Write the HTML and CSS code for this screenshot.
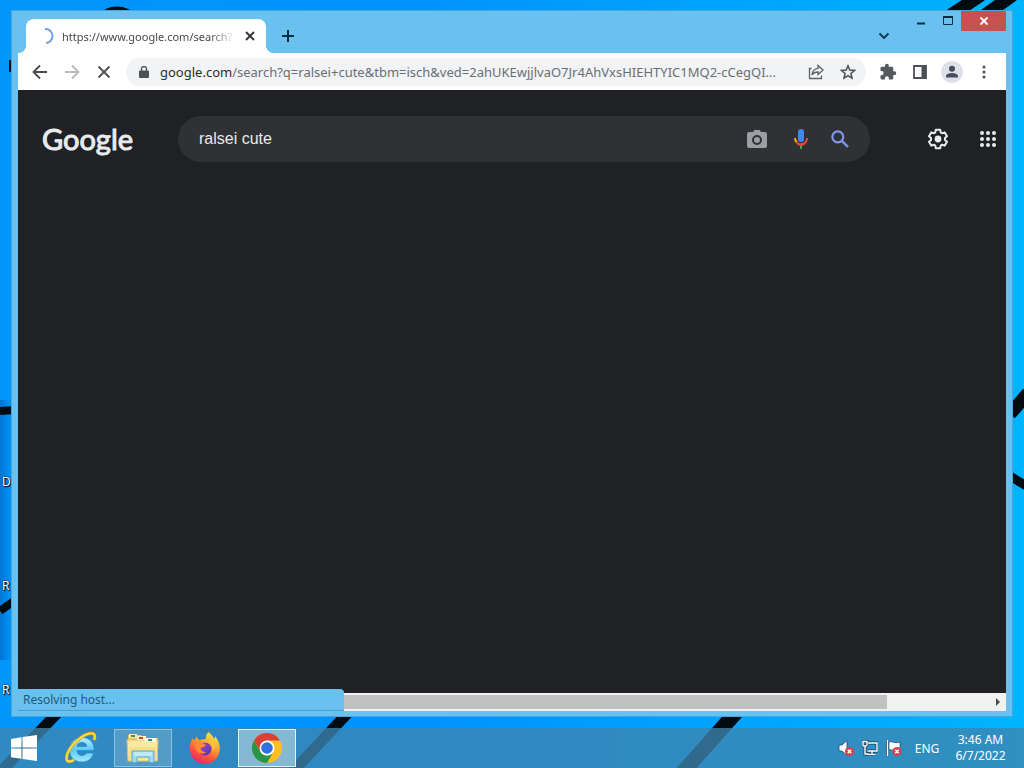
FILE: index.html
```html
<!DOCTYPE html>
<html lang="en">
<head>
<meta charset="utf-8">
<title>Desktop</title>
<link rel="stylesheet" href="styles.css">
</head>
<body>
<div class="desktop">
  <svg class="wallpaper" viewBox="0 0 1024 768" preserveAspectRatio="none" aria-hidden="true">
    <g fill="none" stroke="#020b10">
      <ellipse cx="117" cy="15" rx="14" ry="7" fill="#063a70" stroke-width="3"/>
      <path d="M0 411 14 410M0 611 14 601" stroke-width="8"/>
      <path d="M10 60v12" stroke-width="2"/>
      <path d="M70 700-17 790M360 700 268 798" stroke-width="11"/>
      <path d="M747 700 660 798" stroke-width="15"/>
      <path d="M981-5 951 15M1013-5 985 15M1010 414 1028 393" stroke-width="13"/>
      <path d="M1010 476 1028 487" stroke-width="9"/>
    </g>
  </svg>
  <span class="shortcut shortcut-1">D</span>
  <span class="shortcut shortcut-2">R</span>
  <span class="shortcut shortcut-3">R</span>

  <main class="window">
    <header class="titlebar">
      <div class="tab">
        <svg class="spinner" width="16" height="16" viewBox="0 0 16 16"><path d="M7 1a7 7 0 0 1 1 14" fill="none" stroke="#6fa0e4" stroke-width="2"/></svg>
        <span class="tab-title">https://www.google.com/search?</span>
        <button class="tab-close" aria-label="Close tab"><svg width="10" height="10" viewBox="0 0 10 10"><path d="m1 1 8 8M9 1 1 9" stroke="#333" stroke-width="1.8"/></svg></button>
      </div>
      <button class="new-tab" aria-label="New tab"><svg width="12" height="12" viewBox="0 0 12 12"><path d="M6 0v12M0 6h12" stroke="#0b2c40" stroke-width="2"/></svg></button>
      <button class="tab-search" aria-label="Search tabs"><svg width="12" height="8" viewBox="0 0 12 8"><path d="m1.500 1.500 4.500 4.500 4.500-4.500" fill="none" stroke="#12324a" stroke-width="1.800"/></svg></button>
      <div class="controls">
        <button class="control" aria-label="Minimize"><svg width="12" height="12" viewBox="0 0 12 12"><path d="M2 8.500h8" stroke="#0e2c46" stroke-width="2"/></svg></button>
        <button class="control" aria-label="Maximize"><svg width="12" height="12" viewBox="0 0 12 12"><path d="M1.500 2h9v7.500h-9z" fill="none" stroke="#0e2c46"/><path d="M1 2h10" stroke="#0e2c46" stroke-width="2"/></svg></button>
        <button class="control control-close" aria-label="Close"><svg width="10" height="10" viewBox="0 0 10 10"><path d="m1.500 1.500 7 7M8.500 1.500l-7 7" stroke="#fff" stroke-width="1.800"/></svg></button>
      </div>
    </header>

    <nav class="toolbar" aria-label="Browser">
      <button class="tool" aria-label="Back"><svg width="16" height="16" viewBox="0 0 16 16"><path d="M15 8H2M8 1.500 1.500 8 8 14.500" fill="none" stroke="#4b4d50" stroke-width="1.900"/></svg></button>
      <button class="tool" aria-label="Forward" disabled><svg width="16" height="16" viewBox="0 0 16 16"><path d="M1 8h13M8 1.500 14.500 8 8 14.500" fill="none" stroke="#b9babc" stroke-width="1.900"/></svg></button>
      <button class="tool" aria-label="Stop"><svg width="14" height="14" viewBox="0 0 14 14"><path d="m1.500 1.500 11 11M12.500 1.500l-11 11" stroke="#4b4d50" stroke-width="1.800"/></svg></button>
      <div class="omnibox">
        <svg width="10" height="12" viewBox="0 0 10 12"><path d="M1 4.500h8q1 0 1 1V11q0 1-1 1H1q-1 0-1-1V5.500q0-1 1-1z" fill="#4d5054"/><path d="M2.500 5V3a2.500 2.500 0 0 1 5 0v2" fill="none" stroke="#4d5054" stroke-width="1.300"/></svg>
        <a class="url" href="#"><span class="host">google.com</span>/search?q=ralsei+cute&amp;tbm=isch&amp;ved=2ahUKEwjjlvaO7Jr4AhVxsHIEHTYIC1MQ2-cCegQI...</a>
        <button class="omni-action" aria-label="Share"><svg width="16" height="16" viewBox="0 0 16 16"><path d="M3.500 4.500H1.500v10h12v-3M10 1.500l5 4.500-5 4.500V8C7 8 5.200 9 4 11c.3-3.500 2.500-6.200 6-6.600z" fill="none" stroke="#5c5f63" stroke-width="1.300"/></svg></button>
        <button class="omni-action" aria-label="Bookmark"><svg width="16" height="16" viewBox="0 0 16 16"><path d="m8 1.800 1.800 4.300 4.700.4-3.600 3 1.100 4.600L8 11.700l-4 2.400 1.100-4.600-3.600-3 4.700-.4z" fill="none" stroke="#4b4e52" stroke-width="1.500"/></svg></button>
      </div>
      <button class="tool" aria-label="Extensions"><svg width="18" height="18" viewBox="0 0 24 24"><path d="M20.500 11H19V7c0-1.100-.9-2-2-2h-4V3.500a2.500 2.500 0 0 0-5 0V5H4a2 2 0 0 0-2 2v3.800h1.500a2.700 2.700 0 0 1 0 5.400H2V20c0 1.100.9 2 2 2h3.800v-1.500a2.700 2.700 0 0 1 5.400 0V22H17c1.100 0 2-.9 2-2v-4h1.500a2.500 2.500 0 0 0 0-5z" fill="#55585c"/></svg></button>
      <button class="tool" aria-label="Side panel"><svg width="14" height="14" viewBox="0 0 14 14"><path d="M1 1h12v12H1z" fill="none" stroke="#4d5054" stroke-width="1.800"/><path d="M8.500 1H13v12H8.500z" fill="#4d5054"/></svg></button>
      <button class="tool" aria-label="Profile"><svg width="22" height="22" viewBox="0 0 22 22"><circle cx="11" cy="11" r="11" fill="#dee1e8"/><circle cx="11" cy="7.800" r="3" fill="#454c5e"/><path d="M5 16.500V15c0-2 3.500-3 6-3s6 1 6 3v1.500z" fill="#454c5e"/></svg></button>
      <button class="tool" aria-label="Menu"><svg width="4" height="14" viewBox="0 0 4 14"><g fill="#4d5054"><circle cx="2" cy="2" r="1.500"/><circle cx="2" cy="7" r="1.500"/><circle cx="2" cy="12" r="1.500"/></g></svg></button>
    </nav>

    <section class="page">
      <div class="search-row">
        <a class="logo" href="#">Google</a>
        <form class="search" role="search">
          <input class="query" type="text" value="ralsei cute" aria-label="Search">
          <button class="search-action camera" type="button" aria-label="Search by image"><svg width="20" height="18" viewBox="0 0 20 18"><path d="M2 2h4l1.500-2h5L14 2h4q2 0 2 2v12q0 2-2 2H2q-2 0-2-2V4q0-2 2-2z" fill="#9b9ea2"/><circle cx="10" cy="10" r="4" fill="#9b9ea2" stroke="#303134" stroke-width="2"/></svg></button>
          <button class="search-action mic" type="button" aria-label="Search by voice"><svg width="24" height="24" viewBox="0 0 24 24"><rect x="9" y="2" width="6" height="13" rx="3" fill="#4285f4"/><path d="M11 18.100h2V22h-2z" fill="#34a853"/><path d="M5 11h2c0 1.500.6 2.700 1.500 3.600l-1.400 1.400A7 7 0 0 1 5 11z" fill="#f4b400"/><path d="M12 18.900c-1.900 0-3.700-.9-4.900-2.700l1.400-1.500A5 5 0 0 0 17 11h2c0 4-3 7.900-7 7.900z" fill="#ea4335"/></svg></button>
          <button class="search-action" type="submit" aria-label="Search"><svg width="18" height="18" viewBox="0 0 18 18"><circle cx="6.800" cy="6.800" r="5.500" fill="none" stroke="#7f97ef" stroke-width="2.200"/><path d="m10.800 10.800 6.200 6.200" stroke="#7f97ef" stroke-width="2.400"/></svg></button>
        </form>
        <div class="page-actions">
          <button class="page-action" aria-label="Settings"><svg width="22" height="22" viewBox="0 0 24 24"><path d="M9.600 1.800h4.800l.6 3.100 1.500.9 2.900-1 2.400 4.200-2.200 2v2l2.200 2-2.400 4.200-2.900-1-1.500.9-.6 3.100H9.600L9 19.100l-1.500-.9-2.900 1L2.200 15l2.200-2v-2L2.200 9l2.400-4.200 2.900 1L9 4.900z" fill="none" stroke="#e8eaed" stroke-width="2.200" stroke-linejoin="round"/><circle cx="12" cy="12" r="3.700" fill="#e8eaed"/></svg></button>
          <button class="page-action" aria-label="Google apps"><svg width="16" height="16" viewBox="0 0 16 16"><g fill="#e8eaed"><circle cx="2" cy="2" r="2"/><circle cx="8" cy="2" r="2"/><circle cx="14" cy="2" r="2"/><circle cx="2" cy="8" r="2"/><circle cx="8" cy="8" r="2"/><circle cx="14" cy="8" r="2"/><circle cx="2" cy="14" r="2"/><circle cx="8" cy="14" r="2"/><circle cx="14" cy="14" r="2"/></g></svg></button>
        </div>
      </div>
      <div class="scrollbar">
        <div class="thumb"></div>
        <button class="scroll-right" aria-label="Scroll right"><svg width="4" height="8" viewBox="0 0 4 8"><path d="m0 0 4 4-4 4z" fill="#4b4b4b"/></svg></button>
      </div>
      <div class="status" role="status">Resolving host...</div>
    </section>
  </main>

  <footer class="taskbar">
    <button class="start" aria-label="Start"><svg width="28" height="26" viewBox="0 0 28 26"><path d="M1 4 11.500 2.300V12.500H1zM12.500 2.100 27 0v12.500H12.500zM1 13.500h10.500v10.200L1 22.200zM12.500 13.500H27V26l-14.500-2.100z" fill="#fff"/></svg></button>
    <button class="task" aria-label="Internet Explorer"><svg width="32" height="34" viewBox="0 0 32 34">
      <defs><linearGradient id="ie" x2="0" y2="1"><stop offset="0" stop-color="#b6edff"/><stop offset=".5" stop-color="#5ccaf5"/><stop offset="1" stop-color="#a4e6fd"/></linearGradient></defs>
      <path d="M29 19.500H12c0 3 2 5 5 5 2 0 3.500-.8 4.300-2.500h7.200C27 28 22.500 31 17 31 9.500 31 4.500 26 4.500 19S9.500 6.500 17 6.500 29.500 11.500 29 19.500zM12 15.500h9.800c-.2-2.600-2-4-4.800-4s-4.600 1.400-5 4z" fill="url(#ie)" stroke="#238fca" stroke-width=".7" fill-rule="evenodd"/>
      <path d="M29 9c1.500-3.500 1-6.300-2-6.600C19 1.500 2 16 1.500 27c-.1 4 3 4.500 7.500 2" fill="none" stroke="#c99b1d" stroke-width="3.200"/>
      <path d="M29 9c1.500-3.500 1-6.300-2-6.600C19 1.500 2 16 1.500 27c-.1 4 3 4.500 7.500 2" fill="none" stroke="#f8db43" stroke-width="2.200"/></svg></button>
    <button class="task task-open" aria-label="File Explorer"><svg width="34" height="30" viewBox="0 0 34 30">
      <path d="M2 2h13l1 3h16v23H2z" fill="#e9c967"/><path d="M3 1h8v4H3z" fill="#f7e9a8"/><path d="M11 3h9v4h-9z" fill="#fff4c0"/><path d="M19 5h11v4H19z" fill="#fffbe0"/>
      <path d="M5 2h4v2H5z" fill="#31985a"/><path d="M13 4h4v2h-4z" fill="#c4482f"/><path d="M22 6h4v2h-4z" fill="#31889b"/><path d="M1 7h30q1 0 1 1l-1 20H2z" fill="#fae9a0" stroke="#dec269"/>
      <path d="M11 4h9v3h-9z" fill="#fff4c0"/><path d="M13 4h4v2h-4z" fill="#c4482f"/><path d="M19 6h11v3H19z" fill="#fffbe0"/><path d="M22 6h4v2h-4z" fill="#31889b"/>
      <path d="M3 14h27v12H3z" fill="#f6df89"/><path d="M6 29.500V18h22v11.500h-5V24H11v5.500z" fill="#9dd9f2" stroke="#5aaed6"/><path d="M8 20h18M8 22h18" stroke="#e4faff"/></svg></button>
    <button class="task" aria-label="Firefox"><svg width="32" height="32" viewBox="0 0 32 32">
      <defs><linearGradient id="fx" x1=".8" x2=".3" y2="1"><stop offset="0" stop-color="#fff04a"/><stop offset=".42" stop-color="#ff9f2c"/><stop offset=".72" stop-color="#ff5040"/><stop offset="1" stop-color="#e92370"/></linearGradient><linearGradient id="fp" x2="1" y2="1"><stop offset="0" stop-color="#a34bdd"/><stop offset="1" stop-color="#5532a8"/></linearGradient></defs>
      <path d="M20 0c2 3 4 4 5 7 1-1 1-2 1-3 4 5 6 11 4 17-2 7-8 11-14 11C7 32 1 25 1 17c0-5 1-8 3-11l1 3 3-5c0 2 1 4 3 4 3-1 5 0 6-2-.5-3 1-5 3-6z" fill="url(#fx)"/>
      <circle cx="16" cy="17" r="6.500" fill="url(#fp)"/><path d="M6 10c3-1 5 0 7 1l4 2c-1 2-4 2-5 3-1 2 2 4 5 4-3 3-8 1-10-2-1-3-1-5-1-8z" fill="#ff8b2e"/><path d="M18 8c5 2 7 6 5 11 5-3 4-10-5-11z" fill="#ffc83b"/></svg></button>
    <button class="task task-active" aria-label="Google Chrome"><svg width="30" height="30" viewBox="0 0 30 30">
      <circle cx="15" cy="15" r="15" fill="#fbbf20"/><path d="M15 15 2 7.500A15 15 0 0 1 28 7.500H15z" fill="#dc4034"/><path d="M2 7.500 8.500 18.750 15 15V7.500z" fill="#dc4034"/><path d="M2 7.500a15 15 0 0 0 13 22.500l6.500-11.250a7.500 7.500 0 0 1-13 0z" fill="#2a9547"/>
      <circle cx="15" cy="15" r="7.500" fill="#fff"/><circle cx="15" cy="15" r="5.800" fill="#2f70dc"/></svg></button>
    <div class="tray">
      <button class="tray-icon" aria-label="Volume muted"><svg width="16" height="16" viewBox="0 0 16 16"><path d="M1 5h3l5-4.500v15L4 11H1z" fill="#fff" stroke="#23445c" stroke-width=".8"/><circle cx="11.500" cy="11.500" r="4.500" fill="#d5424a"/><path d="m9.800 9.800 3.400 3.400M13.200 9.800l-3.400 3.400" stroke="#fff" stroke-width="1.500"/></svg></button>
      <button class="tray-icon" aria-label="Network"><svg width="16" height="16" viewBox="0 0 16 16"><path d="M6 3h9v8H5.500M10 11v3M6.500 14.500h7M3 6v8h4M1 1.500h4V5q0 1-2 1T1 5z" fill="none" stroke="#173c58" stroke-width="2.800"/><path d="M6 3h9v8H5.500M10 11v3M6.500 14.500h7M3 6v8h4M1 1.500h4V5q0 1-2 1T1 5z" fill="none" stroke="#fff" stroke-width="1.400"/></svg></button>
      <button class="tray-icon" aria-label="Action Center"><svg width="16" height="16" viewBox="0 0 16 16"><path d="M1 0v16" stroke="#173c58" stroke-width="3"/><path d="M1.500 0v16" stroke="#fff" stroke-width="1.500"/><path d="M3 2c4-1 5 2 11 0v8c-5 2-7-1-11 0z" fill="#fff" stroke="#23445c" stroke-width=".7"/><circle cx="11" cy="11.500" r="4.500" fill="#d5424a"/><path d="m9.300 9.800 3.400 3.400M12.700 9.800l-3.400 3.400" stroke="#fff" stroke-width="1.500"/></svg></button>
      <button class="language">ENG</button>
      <button class="clock"><time>3:46 AM</time><span>6/7/2022</span></button>
    </div>
  </footer>
</div>
</body>
</html>
```
FILE: styles.css
```css
* {
  box-sizing: border-box;
}

body {
  margin: 0;
  font-family: "Noto Sans", "Open Sans", sans-serif;
  font-size: 12px;
}

button {
  display: flex;
  align-items: center;
  justify-content: center;
  margin: 0;
  padding: 0;
  border: 0;
  background: none;
  color: inherit;
  font: inherit;
}

svg {
  display: block;
  flex: none;
}

a {
  color: inherit;
  text-decoration: none;
}

.desktop {
  position: relative;
  display: flex;
  flex-direction: column;
  min-height: 100vh;
  overflow: hidden;
  background:
    linear-gradient(90deg, rgba(0, 80, 170, 0.45), transparent 12px) 0 400px / 100% 260px no-repeat,
    linear-gradient(90deg, #0096fa, #0092ff 40%, #00b4ff);
}

.wallpaper {
  position: absolute;
  inset: 0;
  width: 100%;
  height: 100%;
}

.shortcut {
  position: absolute;
  left: 2px;
  color: #fff;
  line-height: 16px;
  text-shadow: 1px 1px 1px #000, 0 0 2px #000;
}

.shortcut-1 {
  top: 474px;
}

.shortcut-2 {
  top: 578px;
}

.shortcut-3 {
  top: 682px;
}

.window {
  position: relative;
  display: flex;
  flex: 1;
  flex-direction: column;
  margin: 10px 11px 11px;
  padding: 0 7px 6px;
  background: #69c1f0;
  box-shadow: 0 0 0 1px #47a7dc inset;
}

.titlebar {
  display: flex;
  align-items: flex-end;
  height: 43px;
  padding-left: 8px;
}

.tab {
  position: relative;
  display: flex;
  align-items: center;
  gap: 8px;
  width: 240px;
  height: 34px;
  padding: 0 10px 0 12px;
  border-radius: 8px 8px 0 0;
  background: #fff;
}

.tab::before,
.tab::after {
  content: "";
  position: absolute;
  bottom: 0;
  width: 8px;
  height: 8px;
}

.tab::before {
  right: 100%;
  background: radial-gradient(circle at 0 0, transparent 8px, #fff 8px);
}

.tab::after {
  left: 100%;
  background: radial-gradient(circle at 100% 0, transparent 8px, #fff 8px);
}

.tab-title {
  flex: 1;
  overflow: hidden;
  color: #45484c;
  font-size: 11px;
  white-space: nowrap;
  mask-image: linear-gradient(90deg, #000 85%, transparent);
}

.tab-close {
  width: 12px;
  height: 16px;
}

.new-tab {
  width: 28px;
  height: 34px;
  margin-left: 8px;
}

.tab-search {
  width: 28px;
  height: 34px;
  margin-left: auto;
}

.controls {
  display: flex;
  align-self: flex-start;
  margin-left: 9px;
  padding-top: 1px;
}

.control {
  width: 27px;
  height: 20px;
}

.control-close {
  width: 45px;
  background: #c75050;
}

.toolbar {
  display: flex;
  align-items: center;
  height: 37px;
  padding: 0 6px;
  background: #fff;
}

.tool {
  flex: none;
  width: 32px;
  height: 32px;
}

.omnibox {
  display: flex;
  flex: 1;
  align-items: center;
  min-width: 0;
  height: 28px;
  margin: 0 6px;
  padding: 0 2px 0 13px;
  border-radius: 14px;
  background: #f1f3f4;
}

.url {
  flex: 1;
  margin-left: 11px;
  overflow: hidden;
  color: #6b6f74;
  font-size: 13px;
  white-space: nowrap;
}

.host {
  color: #2b2d30;
}

.omni-action {
  flex: none;
  width: 32px;
  height: 28px;
}

.page {
  position: relative;
  display: flex;
  flex: 1;
  flex-direction: column;
  justify-content: space-between;
  background: #202124;
}

.search-row {
  display: flex;
  align-items: center;
  padding: 26px 0 0 24px;
}

.logo {
  flex: none;
  width: 136px;
  color: #e8eaed;
  font-family: Lato, sans-serif;
  font-size: 29px;
  line-height: 46px;
  -webkit-text-stroke: 1px #e8eaed;
}

.search {
  display: flex;
  flex: 1;
  align-items: center;
  max-width: 692px;
  height: 46px;
  padding: 0 10px 0 21px;
  border-radius: 23px;
  background: #303134;
}

.query {
  flex: 1;
  min-width: 0;
  padding: 0;
  border: 0;
  outline: 0;
  background: none;
  color: #e8eaed;
  font: 16px "Liberation Sans", Arial, sans-serif;
}

.search-action {
  width: 40px;
  height: 46px;
}

.camera {
  width: 50px;
}

.mic {
  width: 38px;
}

.page-actions {
  display: flex;
  gap: 12px;
  margin-left: auto;
}

.page-action {
  width: 40px;
  height: 40px;
}

.page-action:last-child {
  width: 36px;
}

.scrollbar {
  display: flex;
  align-items: center;
  height: 18px;
  background: #f1f1f1;
}

.thumb {
  width: 88%;
  height: 14px;
  background: #c1c1c1;
}

.scroll-right {
  width: 17px;
  height: 18px;
  margin-left: auto;
}

.status {
  position: absolute;
  bottom: 0;
  left: 0;
  width: 33%;
  height: 22px;
  padding-left: 5px;
  border-bottom: 1px solid #4a9fcd;
  border-radius: 0 4px 0 0;
  background: #69c1f0;
  color: #24597a;
  line-height: 22px;
}

.taskbar {
  position: relative;
  display: flex;
  align-items: center;
  gap: 4px;
  height: 40px;
  padding-right: 11px;
  background: rgba(62, 133, 176, 0.78);
  color: #fff;
}

.start {
  width: 48px;
  height: 40px;
}

.task {
  width: 58px;
  height: 38px;
}

.task-open {
  border: 1px solid rgba(160, 210, 235, 0.7);
  background: rgba(140, 185, 210, 0.4);
}

.task-active {
  border: 1px solid #e3f3fb;
  background: rgba(170, 205, 220, 0.7);
}

.tray {
  display: flex;
  align-items: center;
  margin-left: auto;
}

.tray-icon {
  width: 24px;
  height: 40px;
}

.language {
  width: 42px;
  height: 40px;
}

.clock {
  flex-direction: column;
  width: 65px;
  height: 40px;
  line-height: 16px;
}
```
